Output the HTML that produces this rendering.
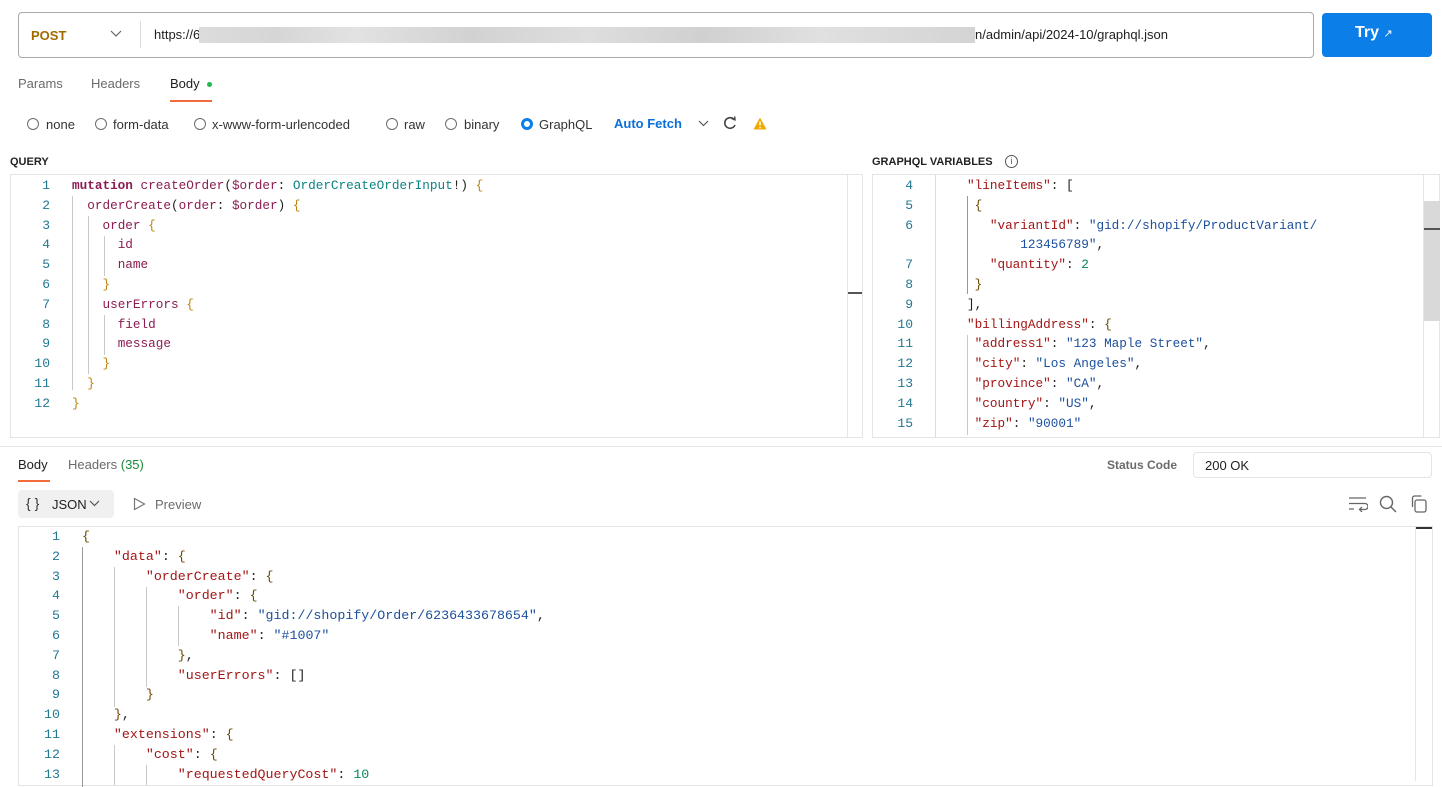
<!DOCTYPE html>
<html><head><meta charset="utf-8"><style>
*{box-sizing:border-box;margin:0;padding:0}
body{width:1442px;height:781px;overflow:hidden;background:#fff;font-family:"Liberation Sans",sans-serif;color:#212121;position:relative}
.a{position:absolute;white-space:pre}
.m{font-family:"Liberation Mono",monospace;font-size:13px}
.ln{color:#237893;text-align:right}
.k{color:#a31515}.s{color:#1c4f9c}.n{color:#098658}.b{color:#6b4a00}
.q1{color:#8b1c52;font-weight:bold}.q2{color:#8b1c52}.q3{color:#0c8383}.q4{color:#b8860b}
.g{position:absolute;width:1px;background:#c8c8c8}
.t{font-size:13px;color:#6b6b6b}
.r{position:absolute;width:12px;height:12px;border:1px solid #6b6b6b;border-radius:50%}
</style></head><body>
<!-- URL bar -->
<div class="a" style="left:18px;top:12px;width:1296px;height:46px;border:1px solid #aaa;border-radius:4px"></div>
<div class="a" style="left:31px;top:28px;font-size:13px;font-weight:bold;color:#a46a00">POST</div>
<svg class="a" style="left:110px;top:30px" width="12" height="8"><path d="M1 1l5 5 5-5" fill="none" stroke="#666" stroke-width="1.2"/></svg>
<div class="a" style="left:140px;top:21px;width:1px;height:27px;background:#ddd"></div>
<div class="a" style="left:154px;top:27px;font-size:13px">https://6</div>
<div class="a" style="left:199px;top:27px;width:776px;height:16px;background:linear-gradient(90deg,#dcdcdc,#d6d6d6 10%,#e2e2e2 20%,#d2d2d2 35%,#dedede 50%,#d0d0d0 65%,#e0e0e0 80%,#d4d4d4)"></div>
<div class="a" style="left:975px;top:27px;font-size:13px">n/admin/api/2024-10/graphql.json</div>
<div class="a" style="left:1322px;top:13px;width:110px;height:44px;background:#0b7ee8;border-radius:4px"></div>
<div class="a" style="left:1355px;top:24px;font-size:16px;font-weight:bold;color:#fff">Try <span style="font-size:11px;font-weight:normal">↗</span></div>
<!-- tabs -->
<div class="a t" style="left:18px;top:76px">Params</div>
<div class="a t" style="left:91px;top:76px">Headers</div>
<div class="a" style="left:170px;top:76px;font-size:13px;color:#212121">Body</div>
<div class="a" style="left:207px;top:82px;width:5px;height:5px;border-radius:50%;background:#1fb84c"></div>
<div class="a" style="left:170px;top:100px;width:42px;height:1.5px;background:#f26b3a"></div>
<!-- radios -->
<div class="r" style="left:27px;top:118px"></div><div class="a t" style="left:46px;top:117px;color:#333">none</div>
<div class="r" style="left:95px;top:118px"></div><div class="a t" style="left:113px;top:117px;color:#333">form-data</div>
<div class="r" style="left:194px;top:118px"></div><div class="a t" style="left:212px;top:117px;color:#333">x-www-form-urlencoded</div>
<div class="r" style="left:386px;top:118px"></div><div class="a t" style="left:404px;top:117px;color:#333">raw</div>
<div class="r" style="left:445px;top:118px"></div><div class="a t" style="left:464px;top:117px;color:#333">binary</div>
<div class="r" style="left:521px;top:118px;border:3px solid #0b7ee8"></div><div class="a t" style="left:539px;top:117px;color:#333">GraphQL</div>
<div class="a" style="left:614px;top:116px;font-size:13px;font-weight:bold;color:#0b6fd9">Auto Fetch</div>
<svg class="a" style="left:698px;top:120px" width="11" height="7"><path d="M1 1l4.5 4.5L10 1" fill="none" stroke="#555" stroke-width="1.2"/></svg>
<svg class="a" style="left:723px;top:116px" width="14" height="14"><path d="M11.5 4A5.3 5.3 0 1 0 12 9" fill="none" stroke="#444" stroke-width="1.6"/><path d="M8.5 2.5L12 3.8 11.7 0.5" fill="none" stroke="#444" stroke-width="1.4"/></svg>
<svg class="a" style="left:753px;top:117px" width="14" height="13"><path d="M7 0.5L13.5 12.5H0.5Z" fill="#f2a900"/><path d="M7 4.5v4M7 10v1.3" stroke="#fff" stroke-width="1.5"/></svg>
<!-- QUERY -->
<div class="a" style="left:10px;top:156px;font-size:11px;font-weight:bold;color:#222">QUERY</div>
<div class="a" style="left:10px;top:174px;width:853px;height:264px;border:1px solid #e4e4e4"></div>
<div class="a" style="left:847px;top:175px;width:1px;height:262px;background:#e4e4e4"></div>
<div class="a" style="left:848px;top:292px;width:14px;height:2px;background:#555"></div>
<div class="a m ln" style="left:20px;top:176px;width:30px;line-height:19.8px">1
2
3
4
5
6
7
8
9
10
11
12</div>
<div class="g" style="left:72px;top:196px;height:194px"></div>
<div class="g" style="left:88px;top:216px;height:158px"></div>
<div class="g" style="left:104px;top:236px;height:40px"></div>
<div class="g" style="left:104px;top:315px;height:40px"></div>
<div class="a m" style="left:72px;top:176px;line-height:19.8px;font-size:12.7px"><span class="q1">mutation</span> <span class="q2">createOrder</span>(<span class="q2">$order</span>: <span class="q3">OrderCreateOrderInput</span>!) <span class="q4">{</span>
  <span class="q2">orderCreate</span>(<span class="q2">order</span>: <span class="q2">$order</span>) <span class="q4">{</span>
    <span class="q2">order</span> <span class="q4">{</span>
      <span class="q2">id</span>
      <span class="q2">name</span>
    <span class="q4">}</span>
    <span class="q2">userErrors</span> <span class="q4">{</span>
      <span class="q2">field</span>
      <span class="q2">message</span>
    <span class="q4">}</span>
  <span class="q4">}</span>
<span class="q4">}</span></div>
<!-- VARIABLES -->
<div class="a" style="left:872px;top:156px;font-size:11px;font-weight:bold;color:#222">GRAPHQL VARIABLES</div>
<div class="a" style="left:1005px;top:155px;width:13px;height:13px;border:1px solid #555;border-radius:50%;font-size:9px;text-align:center;line-height:11px;color:#555">i</div>
<div class="a" style="left:872px;top:174px;width:568px;height:264px;border:1px solid #e4e4e4"></div>
<div class="a" style="left:935px;top:175px;width:1px;height:262px;background:#ddd"></div>
<div class="a" style="left:1423px;top:175px;width:1px;height:262px;background:#e4e4e4"></div>
<div class="a" style="left:1424px;top:201px;width:16px;height:120px;background:#d9d9d9"></div>
<div class="a" style="left:1424px;top:228px;width:16px;height:2px;background:#555"></div>
<div class="a m ln" style="left:880px;top:176px;width:33px;line-height:19.8px">4
5
6

7
8
9
10
11
12
13
14
15</div>
<div class="g" style="left:967px;top:196px;height:98px;background:#999"></div>
<div class="g" style="left:967px;top:335px;height:100px"></div>
<div class="a m" style="left:967px;top:176px;line-height:19.8px;font-size:12.7px"><span class="k">"lineItems"</span>: [
 <span class="b">{</span>
   <span class="k">"variantId"</span>: <span class="s">"gid://shopify/ProductVariant/</span>
<span class="s">       123456789"</span>,
   <span class="k">"quantity"</span>: <span class="n">2</span>
 <span class="b">}</span>
],
<span class="k">"billingAddress"</span>: <span class="b">{</span>
 <span class="k">"address1"</span>: <span class="s">"123 Maple Street"</span>,
 <span class="k">"city"</span>: <span class="s">"Los Angeles"</span>,
 <span class="k">"province"</span>: <span class="s">"CA"</span>,
 <span class="k">"country"</span>: <span class="s">"US"</span>,
 <span class="k">"zip"</span>: <span class="s">"90001"</span></div>
<!-- divider -->
<div class="a" style="left:0;top:446px;width:1442px;height:1px;background:#e6e6e6"></div>
<!-- response -->
<div class="a" style="left:18px;top:457px;font-size:13px">Body</div>
<div class="a" style="left:18px;top:480px;width:32px;height:1.5px;background:#f26b3a"></div>
<div class="a t" style="left:68px;top:457px">Headers <span style="color:#1a8a3a">(35)</span></div>
<div class="a" style="left:1107px;top:458px;font-size:12px;font-weight:bold;color:#6b6b6b">Status Code</div>
<div class="a" style="left:1193px;top:452px;width:239px;height:26px;border:1px solid #e4e4e4;border-radius:4px"></div>
<div class="a" style="left:1205px;top:458px;font-size:13px">200 OK</div>
<div class="a" style="left:18px;top:490px;width:96px;height:28px;background:#f0f0f0;border-radius:4px"></div>
<div class="a" style="left:26px;top:495px;font-size:14px;color:#333">{ }</div>
<div class="a" style="left:52px;top:497px;font-size:13px;color:#212121">JSON</div>
<svg class="a" style="left:89px;top:500px" width="11" height="7"><path d="M1 1l4.5 4.5L10 1" fill="none" stroke="#555" stroke-width="1.2"/></svg>
<svg class="a" style="left:133px;top:497px" width="13" height="14"><path d="M1.5 1.5L11.5 7 1.5 12.5Z" fill="none" stroke="#777" stroke-width="1.2"/></svg>
<div class="a t" style="left:155px;top:497px">Preview</div>
<svg class="a" style="left:1348px;top:496px" width="20" height="16"><path d="M1 2h17M1 7.5h16a3 3 0 0 1 0 6h-5M14 11l-2.5 2.5L14 16M1 13h5" fill="none" stroke="#666" stroke-width="1.3"/></svg>
<svg class="a" style="left:1379px;top:495px" width="18" height="18"><circle cx="7.5" cy="7.5" r="6" fill="none" stroke="#666" stroke-width="1.4"/><path d="M12 12l5 5" stroke="#666" stroke-width="1.4"/></svg>
<svg class="a" style="left:1410px;top:495px" width="17" height="18"><rect x="5" y="5" width="11" height="12" rx="2" fill="none" stroke="#666" stroke-width="1.3"/><path d="M2.5 12V3a2 2 0 0 1 2-2h7" fill="none" stroke="#666" stroke-width="1.3"/></svg>
<div class="a" style="left:18px;top:526px;width:1415px;height:260px;border:1px solid #e4e4e4"></div>
<div class="a" style="left:1415px;top:527px;width:1px;height:254px;background:#e4e4e4"></div>
<div class="a" style="left:1416px;top:527px;width:16px;height:2px;background:#333"></div>
<div class="a m ln" style="left:28px;top:527px;width:32px;line-height:19.8px;font-size:13.3px">1
2
3
4
5
6
7
8
9
10
11
12
13</div>
<div class="g" style="left:82px;top:547px;height:240px;background:#999"></div>
<div class="g" style="left:114px;top:567px;height:140px"></div>
<div class="g" style="left:146px;top:587px;height:100px"></div>
<div class="g" style="left:178px;top:606px;height:40px"></div>
<div class="g" style="left:114px;top:745px;height:40px"></div>
<div class="g" style="left:146px;top:765px;height:20px"></div>
<div class="a m" style="left:82px;top:527px;line-height:19.8px;font-size:13.3px"><span class="b">{</span>
    <span class="k">"data"</span>: <span class="b">{</span>
        <span class="k">"orderCreate"</span>: <span class="b">{</span>
            <span class="k">"order"</span>: <span class="b">{</span>
                <span class="k">"id"</span>: <span class="s">"gid://shopify/Order/6236433678654"</span>,
                <span class="k">"name"</span>: <span class="s">"#1007"</span>
            <span class="b">}</span>,
            <span class="k">"userErrors"</span>: []
        <span class="b">}</span>
    <span class="b">}</span>,
    <span class="k">"extensions"</span>: <span class="b">{</span>
        <span class="k">"cost"</span>: <span class="b">{</span>
            <span class="k">"requestedQueryCost"</span>: <span class="n">10</span></div>
</body></html>
